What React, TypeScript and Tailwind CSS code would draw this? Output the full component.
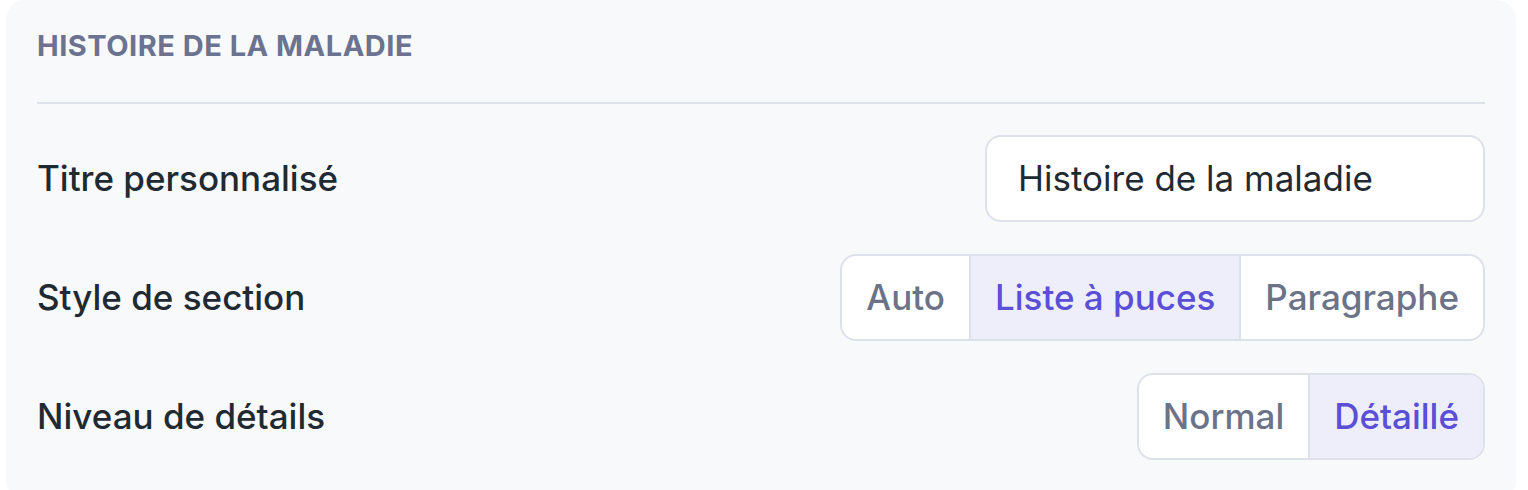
import React from "react";

function Segmented({ options, active }: { options: string[]; active: number }) {
  return (
    <div className="flex h-[87px] overflow-hidden rounded-[16px] border-2 border-[#dde1ea] bg-white">
      {options.map((o, i) => (
        <div
          key={o}
          className={
            "flex items-center px-[24px] text-[35px] font-medium " +
            (i > 0 ? "border-l-2 border-[#dde1ea] " : "") +
            (i === active ? "bg-[#eeeefb] text-[#5a4fd6]" : "text-[#6b7389]")
          }
        >
          {o}
        </div>
      ))}
    </div>
  );
}

export default function App() {
  return (
    <div className="min-h-[490px] bg-white" style={{ fontFamily: "Inter, 'Noto Sans', sans-serif" }}>
      <div className="ml-[6px] w-[1510px] rounded-[20px] bg-[#f8f9fb] px-[31px] pt-[28px] pb-[40px]">
        <div className="border-b-2 border-[#dde1e8] pb-[38px] text-[29px] font-bold uppercase leading-[36px] tracking-[0.5px] text-[#6b7390]">
          Histoire de la maladie
        </div>
        <div className="mt-[31px] flex flex-col gap-[32px]">
          <div className="flex items-center justify-between">
            <div className="text-[35px] font-medium text-[#1f2a33]">Titre personnalisé</div>
            <div className="flex h-[87px] w-[500px] items-center rounded-[16px] border-2 border-[#dde1ea] bg-white px-[31px] text-[35px] text-[#1f2a33]">
              Histoire de la maladie
            </div>
          </div>
          <div className="flex items-center justify-between">
            <div className="text-[35px] font-medium text-[#1f2a33]">Style de section</div>
            <Segmented options={["Auto", "Liste à puces", "Paragraphe"]} active={1} />
          </div>
          <div className="flex items-center justify-between">
            <div className="text-[35px] font-medium text-[#1f2a33]">Niveau de détails</div>
            <Segmented options={["Normal", "Détaillé"]} active={1} />
          </div>
        </div>
      </div>
    </div>
  );
}
